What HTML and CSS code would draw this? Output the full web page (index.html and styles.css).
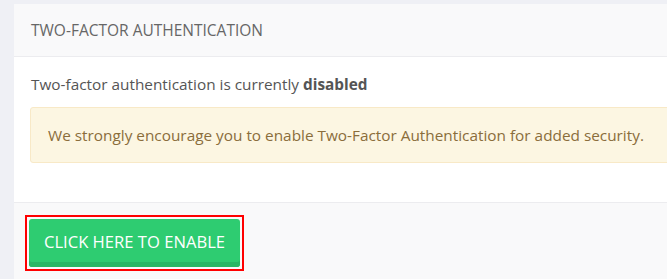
FILE: index.html
```html
<!DOCTYPE html>
<html>
<head>
<meta charset="utf-8">
<link rel="stylesheet" href="styles.css">
</head>
<body>
<div class="card">
  <div class="card-header">Two-Factor Authentication</div>
  <div class="card-body">
    <p class="status">Two-factor authentication is currently <strong>disabled</strong></p>
    <div class="alert">We strongly encourage you to enable Two-Factor Authentication for added security.</div>
  </div>
  <div class="card-footer">
    <span class="focus-ring"><button class="btn-enable">CLICK HERE TO ENABLE</button></span>
  </div>
</div>
</body>
</html>
```
FILE: styles.css
```css
html, body {
  margin: 0;
  padding: 0;
  background: #eff0f5;
  overflow: hidden;
  width: 667px;
  height: 279px;
}
body {
  font-family: "Open Sans", "Liberation Sans", sans-serif;
  font-size: 15.35px;
  line-height: 22px;
  color: #555;
  padding: 4px 0 0 14px;
  box-sizing: border-box;
}
.card {
  width: 720px;
  background: #fff;
}
.card-header {
  background: #f9f9fa;
  border-bottom: 1px solid #ececef;
  height: 53px;
  box-sizing: border-box;
  padding: 0 17px 1px;
  display: flex;
  align-items: center;
  text-transform: uppercase;
  font-size: 15.5px;
  color: #666;
}
.card-body {
  padding: 16px 16px 19px;
}
.status {
  margin: 0 0 12px 1px;
}
.status strong {
  font-weight: 700;
}
.alert {
  background: #fcf6e2;
  border: 1px solid #f8e9c7;
  border-radius: 3px;
  padding: 16px 17px;
  color: #8a6d3b;
  margin-bottom: 20px;
}
.card-footer {
  background: #f9f9fa;
  border-top: 1px solid #ececef;
  padding: 12px 11px 20px;
}
.focus-ring {
  display: inline-flex;
  border: 2px solid #f00;
  padding: 2px;
}
.btn-enable {
  font-family: "Open Sans", "Liberation Sans", sans-serif;
  font-size: 16.6px;
  color: #fff;
  background: #2ecc71;
  border: none;
  border-radius: 3px;
  box-shadow: inset 0 -5px 0 #29b765;
  width: 211px;
  height: 48px;
  padding: 0 0 4px;
  cursor: pointer;
}
```
